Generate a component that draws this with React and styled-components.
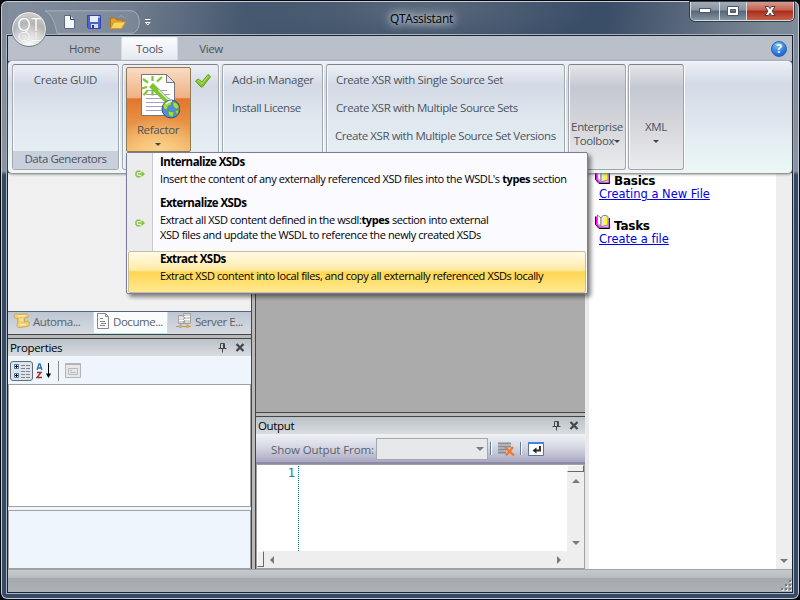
import React from 'react';
import styled, { createGlobalStyle, css } from 'styled-components';

const GlobalStyle = createGlobalStyle`
  * { box-sizing: border-box; }
  body {
    margin: 0;
    overflow: hidden;
    background: #05070a;
    font-family: "Open Sans", "Noto Sans", sans-serif;
    font-size: 11.5px;
    letter-spacing: -0.35px;
    color: #000;
  }
`;

function App() {
  return (
    <Window>
      <GlobalStyle />
      <TitleBar>
        <QuickAccess />
        <Title>QTAssistant</Title>
        <WindowButtons>
          <WindowButton $width={28}>
            <svg width="12" height="6"><rect x=".5" y=".5" width="11" height="4" fill="#fff" stroke="#4d5766" /></svg>
          </WindowButton>
          <WindowButton $width={27}>
            <svg width="12" height="10"><path d="M.5 .5h11v9H.5zM3.500 3.500v3h5v-3z" fill="#fff" stroke="#4d5766" fillRule="evenodd" /></svg>
          </WindowButton>
          <WindowButton $width={47} $close>
            <svg width="14" height="12" viewBox="0 0 14 12">
              <path d="M2 1.500h3.500L7 3.700l1.500-2.200H12L9 6l3 4.500H8.500L7 8.200l-1.500 2.300H2L5 6z" fill="#fff" stroke="#4d3b46" />
            </svg>
          </WindowButton>
        </WindowButtons>
      </TitleBar>
      <Client>
        <TabRow>
          <RibbonTab $width={73}>Home</RibbonTab>
          <RibbonTab $width={57} $active>Tools</RibbonTab>
          <RibbonTab $width={66}>View</RibbonTab>
          <Help>?</Help>
        </TabRow>
        <Ribbon />
        <Work>
          <SideColumn />
          <Splitter />
          <CenterColumn />
          <StartPage />
        </Work>
        <StatusBar>
          <svg width="12" height="12" fill="#747a82">
            <path d="M9 0h2v2H9zM5 4h2v2H5zM9 4h2v2H9zM1 8h2v2H1zM5 8h2v2H5zM9 8h2v2H9z" />
            <path d="M11 1h1v2h-2v-1h1zM7 5h1v2H6v-1h1zM11 5h1v2h-2v-1h1zM3 9h1v2H2v-1h1zM7 9h1v2H6v-1h1zM11 9h1v2h-2v-1h1z" fill="#e4e7ea" />
          </svg>
        </StatusBar>
      </Client>
      <Orb><OrbText>QT</OrbText><OrbMirror>QT</OrbMirror></Orb>
      <RefactorMenu />
    </Window>
  );
}

function QuickAccess() {
  return (
    <Quick>
      <svg width="112" height="26" viewBox="0 0 112 26" fill="none">
        <path d="M1 .8h86c11 0 11 22.500 0 22.500H13C11 12 7 4 1 .8z" fill="#ffffff18" stroke="#a4aebb" />
        {/* new */}
        <path d="M20.500 5.500h6l4 4v9h-10z" fill="#f4f8fb" stroke="#5b6b86" />
        <path d="M26.500 5.500v4h4" fill="#cddbe8" stroke="#33465f" />
        {/* save */}
        <path d="M43.500 5.500h13v13h-12l-1-1z" fill="#4a63d0" stroke="#3348ab" />
        <path d="M46 6h8v6h-8z" fill="#e6effa" />
        <path d="M47 14h7v4h-7z" fill="#d6dce6" />
        <path d="M48 15h2v3h-2z" fill="#26358a" />
        <path d="M54 6h2v2h-2z" fill="#9cb3ea" />
        {/* open */}
        <path d="M66.500 18V8h5l1 2h6v3" fill="#e2a431" stroke="#ad7419" />
        <path d="M66.500 18.500l3.500-6.500h11.500l-4 6.500z" fill="#ffd45e" stroke="#d59a2a" />
        <path d="M75 7c2-2 4-1.500 5 1" stroke="#93aacb" />
        <path d="M101 9.500h5.500M101.500 12.500h4.500l-2.200 2.500z" stroke="#fff" />
      </svg>
    </Quick>
  );
}

function Ribbon() {
  return (
    <RibbonPanel>
      <Group $width={107}>
        <GroupRow $center $track={-0.3}>Create GUID</GroupRow>
        <Caption>Data Generators</Caption>
      </Group>
      <Group $width={97} $gap={3}>
        <RefactorRow>
          <RefactorButton>
            <RefactorIcon />
            <span>Refactor</span>
            <Arrow />
          </RefactorButton>
          <svg width="18" height="18" viewBox="0 0 18 18">
            <path d="M1.500 9l2.700-2L8 10l6-7.500 2.500 2.200L8.500 15H7z" fill="#86c92d" stroke="#5b9a1c" />
            <path d="M3.500 8.800l.7-.5L8 11.500l6.300-7.700" fill="none" stroke="#b5e36b" />
          </svg>
        </RefactorRow>
      </Group>
      <Group $width={101} $gap={3}>
        <GroupRow $track={-0.27}>Add-in Manager</GroupRow>
        <GroupRow>Install License</GroupRow>
      </Group>
      <Group $width={239} $gap={3}>
        <GroupRow $track={-0.36}>Create XSR with Single Source Set</GroupRow>
        <GroupRow>Create XSR with Multiple Source Sets</GroupRow>
        <GroupRow $inset={8} $track={-0.43}>Create XSR with Multiple Source Set Versions</GroupRow>
      </Group>
      <Group $width={58} $gap={3} $collapsed>
        <Collapsed>Enterprise<br />Toolbox<Arrow /></Collapsed>
      </Group>
      <Group $width={56} $gap={2} $collapsed>
        <Collapsed>XML<br /><Arrow /></Collapsed>
      </Group>
    </RibbonPanel>
  );
}

function RefactorIcon() {
  return (
    <svg width="42" height="46" viewBox="0 0 42 46" fill="none">
      <path d="M3.500 1.500h25l8 8v33h-33z" fill="#fff" stroke="#777" />
      <path d="M28.500 1.500v8h8z" fill="#e8e8ee" stroke="#777" />
      <path d="M8 17.500h21M8 21.500h24M8 25.500h24M8 29.500h18M8 33.500h16M8 37.500h16" stroke="#a7a0c0" />
      <path d="M13 12l16 15.500" stroke="#7dc52a" strokeWidth="5.500" />
      <path d="M20.500 17l9.500 9.500" stroke="#d9e3ee" strokeWidth="1.500" />
      <path d="M14.500 3v5M5 6l5 3.500M3.500 15.500l5.500-1.500M5.500 22l4-4M14.500 17v5.500M24 4l-5 4.500" stroke="#7dc52a" strokeWidth="2.200" />
      <circle cx="33" cy="36" r="9" fill="#4c90dc" stroke="#274f86" />
      <path d="M25 33c2-5 6-6 9-5l-1 4-3 1-1 4-3-1zM35 29c3 0 6 3 6 6l-3 1-3-3zM30 38l6 1-1 5-4-1zM37 38l4-1-2 5z" fill="#a6d84a" stroke="#558a20" strokeWidth=".5" />
      <path d="M28 31c2-2 4-3 6-3" stroke="#e7f4ff" strokeWidth="1.500" />
    </svg>
  );
}

function RefactorMenu() {
  return (
    <Menu>
      <MenuItem $height={42}>
        <MenuIcon><LinkIcon /></MenuIcon>
        <MenuText>
          <MenuTitle>Internalize XSDs</MenuTitle>
          <MenuLine>Insert the content of any externally referenced XSD files into the WSDL's <b>types</b> section</MenuLine>
        </MenuText>
      </MenuItem>
      <MenuItem $height={56}>
        <MenuIcon><LinkIcon /></MenuIcon>
        <MenuText $raise={1}>
          <MenuTitle>Externalize XSDs</MenuTitle>
          <MenuLine>Extract all XSD content defined in the wsdl:<b>types</b> section into external</MenuLine>
          <MenuLine>XSD files and update the WSDL to reference the newly created XSDs</MenuLine>
        </MenuText>
      </MenuItem>
      <MenuItem $height={42} $active>
        <MenuIcon $empty />
        <MenuText $raise={2}>
          <MenuTitle>Extract XSDs</MenuTitle>
          <MenuLine>Extract XSD content into local files, and copy all externally referenced XSDs locally</MenuLine>
        </MenuText>
      </MenuItem>
    </Menu>
  );
}

function LinkIcon() {
  return (
    <svg width="10" height="8" viewBox="0 0 10 8" fill="none" stroke="#86c440" strokeWidth="1.500">
      <path d="M5.500 1.300H2.300L1 2.700v2.600l1.300 1.400h3.200M3 4h6M6.500 1.800L9 4 6.500 6.200" />
    </svg>
  );
}

function SideColumn() {
  return (
    <Side>
      <Blank />
      <DocTabs>
        <DocTab $width={85}>
          <svg width="17" height="16" viewBox="0 0 18 16">
            <path d="M2 1c0-1 3-1 3 0l9-.5c3 0 3 4 1 4l-3 .5v4l3-1c3 0 3 5 1 5.500l-9 1.500c-3 0-4-3-2-4V5H3C1 5 1 2 2 1z" fill="#efd06e" stroke="#c9a64a" />
            <path d="M5 2.500h8M7 7h4M7 12h7" stroke="#fbeab0" strokeWidth="1.500" />
          </svg>
          Automa...
        </DocTab>
        <DocTab $width={75} $active>
          <svg width="14" height="16" viewBox="0 0 14 16" fill="none" stroke="#888">
            <path d="M1.500 .5h8l3 3v12h-11z" fill="#fafafa" />
            <path d="M9.500 .5v3h3M4 5.500h3M4 8.500h5M5 10.500h5M4 12.500h5" />
          </svg>
          Docume...
        </DocTab>
        <DocTab $width={83} $last>
          <svg width="17" height="16" viewBox="0 0 17 16">
            <path d="M3.500 2.500h6v8h-6zM8.500 .5h7v10h-7z" fill="#d4d4d4" stroke="#a4a4a4" />
            <path d="M4 5h5M4 7.500h5M9 3.500h6M9 6.500h6" stroke="#fff" />
            <path d="M1 13.500h15M6 10v3M12 11v3" stroke="#9b9b9b" />
            <path d="M4 12h3v3H4zM11 12h3v3h-3z" fill="#e2ad45" />
          </svg>
          Server E...
        </DocTab>
      </DocTabs>
      <Divider />
      <PanelHeader title="Properties" />
      <PropertyTools>
        <svg width="82" height="24" viewBox="0 0 82 24" fill="none">
          <rect x=".5" y="1.500" width="22" height="19" rx="2.500" fill="#dfe3ea" stroke="#646a76" />
          <path d="M4.500 4.500h4v4h-4zM4.500 13.500h4v4h-4z" fill="#fff" stroke="#4f7ab2" />
          <path d="M5 6.500h3M6.500 5v3M5 15.500h3M6.500 14v3" stroke="#000" />
          <path d="M11 5.500h4M16 5.500h4M11 8.500h4M16 8.500h4M11 11.500h4M16 11.500h4M11 14.500h4M16 14.500h4M11 17.500h4M16 17.500h4" stroke="#78839a" />
          <path d="M27 10l2-6h1l2 6M28 8h3" stroke="#2e70a8" strokeWidth="1.300" />
          <path d="M27 12.500h4l-4 5h5" stroke="#a32c2c" strokeWidth="1.400" />
          <path d="M38.500 3v12" stroke="#000" />
          <path d="M36 13.500h5l-2.500 4.500z" fill="#000" />
          <path d="M48.500 1v20" stroke="#8c8c8c" />
          <path d="M55.500 3.500h15v14h-15z" fill="#e8e8e8" stroke="#b4b4b4" />
          <path d="M55 4.500h15" stroke="#b4b4b4" />
          <path d="M58.500 8.500h9v6h-9zM60 10.500h2M60 12.500h6" stroke="#b9b9b9" />
        </svg>
      </PropertyTools>
      <PropertyGrid />
      <PropertyHelp />
    </Side>
  );
}

function PanelHeader({ title }) {
  return (
    <Header>
      <HeaderTitle>{title}</HeaderTitle>
      <svg width="28" height="12" viewBox="0 0 28 12" fill="none" stroke="#414852">
        <path d="M3.500 1.500h4v5h-4zM1.500 6.500h8M5.500 6.500v4M6.500 1.500v5" />
        <path d="M19.500 2l7 7M26.500 2l-7 7" strokeWidth="2.300" />
      </svg>
    </Header>
  );
}

function CenterColumn() {
  return (
    <Center>
      <Canvas />
      <Divider />
      <PanelHeader title="Output" />
      <OutputTools>
        <OutputLabel>Show Output From:</OutputLabel>
        <Combo><Arrow $wide /></Combo>
        <svg width="56" height="16" viewBox="0 0 56 16" fill="none">
          <path d="M2.500 1v13M32.500 1v13" stroke="#5f7f9b" />
          <path d="M3.500 1v13M33.500 1v13" stroke="#fff" />
          <path d="M10 2.500h13M10 5.500h13M10 8.500h10M10 11.500h8" stroke="#888e91" strokeWidth="2" />
          <path d="M17 6l9 8.500M25 6l-7 8.500" stroke="#ef7930" strokeWidth="2.400" />
          <path d="M40.500 1.500h15v13h-15z" fill="#fff" stroke="#5d7290" />
          <path d="M40 1h16v2H40z" fill="#4385dc" />
          <path d="M52 5v4.500h-5" stroke="#333" strokeWidth="2" />
          <path d="M44.500 9.500l4-3v6z" fill="#222" />
        </svg>
      </OutputTools>
      <Editor>
        <Gutter>1</Gutter>
        <div />
        <VScroll>
          <SplitHandle />
          <VTrack>
            <ScrollArrow $dir="up" />
            <ScrollArrow $dir="down" />
          </VTrack>
        </VScroll>
        <HScroll>
          <SideHandle />
          <HTrack>
            <ScrollArrow $dir="left" />
            <ScrollArrow $dir="right" />
          </HTrack>
        </HScroll>
      </Editor>
    </Center>
  );
}

function StartPage() {
  return (
    <Start>
      <Links>
        <Topic><Book /><b>Basics</b></Topic>
        <TopicLink>Creating a New File</TopicLink>
        <Topic><Book /><b>Tasks</b></Topic>
        <TopicLink>Create a file</TopicLink>
      </Links>
      <PageScroll><ScrollArrow $dir="down" /></PageScroll>
    </Start>
  );
}

function Book() {
  return (
    <svg width="16" height="16" viewBox="0 0 16 16" fill="none">
      <path d="M.5 2.500v8l3.500 4h10.500V4" fill="#fff" stroke="#000" />
      <path d="M1.500 2.500v7.500l3.500 4" stroke="#f0f" strokeWidth="1.400" />
      <path d="M5 13.200h9V4" stroke="#c000c0" strokeWidth="1" />
      <path d="M2.500 1l3.500 3v8.500L2.500 9z" fill="#fff" stroke="#888" />
      <path d="M6 4l2-2.500h3l2 1v8.500l-4 1-3 .5z" fill="#e8e8e0" stroke="#888" />
      <path d="M9.500 4l2.500-1v7l-2.500 1z" fill="#ff0" />
    </svg>
  );
}

const Window = styled.div`
  position: relative;
  width: 800px;
  height: 600px;
  padding: 1px 7px 7px 7px;
  border: 1px solid #05070a;
  border-radius: 7px;
  background:
    linear-gradient(to bottom, #7d8998 0, #8a95a3 170px, #34476080 174px, #34476000 260px) left / 7px 100% no-repeat,
    linear-gradient(to bottom, #7d8998 0, #8a95a3 170px, #34476080 174px, #34476000 260px) right / 7px 100% no-repeat,
    radial-gradient(ellipse 170px 44px at 420px 8px, #5b6a7d, #5b6a7d00),
    linear-gradient(100deg, #8490a0 0, #6f7c8d 130px, #475970 240px, #3c4f68 340px, #3b4e68 600px, #566579 670px, #7b8896 760px) top / 100% 36px no-repeat,
    #344a66;
  box-shadow: inset 0 0 0 1px #c5ced8;
`;

const TitleBar = styled.div`
  display: flex;
  height: 33px;
  align-items: flex-start;
`;

const Quick = styled.div`
  flex: none;
  width: 240px;
  padding: 8px 0 0 36px;
`;

const Title = styled.div`
  flex: 1;
  padding: 8px 0 0 142px;
  font-size: 12px;
  line-height: 17px;
  letter-spacing: -0.3px;
  text-shadow: 0 0 6px #cfd8e2, 0 0 8px #cfd8e2, 0 0 12px #cfd8e2;
`;

const WindowButtons = styled.div`
  display: flex;
  height: 19px;
  margin-right: -2px;
  border: 1px solid #d5dbe2;
  border-top: 0;
  border-radius: 0 0 5px 5px;
  box-shadow: 0 0 0 1px #303a48;
  overflow: hidden;
`;

const WindowButton = styled.div`
  display: flex;
  align-items: center;
  justify-content: center;
  width: ${({ $width }) => $width}px;
  border-left: 1px solid #d5dbe2;
  background: ${({ $close }) => $close
    ? 'linear-gradient(#d79a8e, #c4614e 45%, #a92d18 50%, #c8604a)'
    : 'linear-gradient(#a3adb9, #8693a1 45%, #566577 50%, #8593a2)'};
  &:first-child { border-left: 0; }
`;

const Orb = styled.div`
  position: absolute;
  left: 10px;
  top: 10px;
  width: 36px;
  height: 36px;
  border: 1px solid #767d86;
  border-radius: 50%;
  background: radial-gradient(circle at 50% 100%, #fff, #dcdcdd 35%, #b2b4b6 60%, #d3d4d5 90%);
  box-shadow: inset 0 0 0 1px #e9ebed;
  color: #fff;
  font-size: 18px;
  letter-spacing: 0;
  text-align: center;
  text-shadow: 0 0 1px #8e9094;
  overflow: hidden;
`;

const OrbText = styled.div`
  height: 14px;
  margin-top: 5px;
  line-height: 15px;
`;

const OrbMirror = styled.div`
  height: 14px;
  transform: scaleY(-0.7);
  line-height: 18px;
  opacity: 0.7;
`;

const Client = styled.div`
  display: flex;
  flex-direction: column;
  width: 786px;
  height: 558px;
  margin-left: -1px;
  border: 1px solid #1c2430;
  box-shadow: 0 0 0 1px #aab4c0;
`;

const TabRow = styled.div`
  display: flex;
  flex: none;
  height: 25px;
  padding-left: 40px;
  background: #b9c0ca;
  border-bottom: 1px solid #b9bcc0;
`;

const RibbonTab = styled.div`
  width: ${({ $width }) => $width}px;
  margin-top: 1px;
  line-height: 24px;
  text-align: center;
  color: #4c535c;
  ${({ $active }) => $active && css`
    border: 1px solid #a9f0f0;
    border-top-color: #eef3f8;
    border-bottom: 0;
    border-radius: 2px 2px 0 0;
    background: linear-gradient(#fafbfd, #e4e9f1);
    line-height: 22px;
  `}
`;

const Help = styled.div`
  width: 16px;
  height: 16px;
  margin: 5px 5px 0 auto;
  border: 1px solid #2563b5;
  border-radius: 50%;
  background: radial-gradient(circle at 40% 20%, #7fc0f5, #2c7bd8 60%, #2a48c8);
  color: #fff;
  font-size: 12px;
  font-weight: bold;
  line-height: 14px;
  text-align: center;
`;

const RibbonPanel = styled.div`
  position: relative;
  z-index: 1;
  display: flex;
  flex: none;
  height: 112px;
  padding: 2px 0 0 4px;
  border-top: 1px solid #f3f5fa;
  border-radius: 4px;
  background: linear-gradient(#eceff7, #d3dae6 20%, #dbe3ec 45%, #e6f0f3 75%, #ecf7f6);
  box-shadow: 0 1px 3px #666;
`;

const Group = styled.div`
  display: flex;
  flex-direction: column;
  flex: none;
  width: ${({ $width }) => $width}px;
  height: 106px;
  padding-top: 1px;
  margin-left: ${({ $gap = 0 }) => $gap}px;
  border: 1px solid ${({ $collapsed }) => ($collapsed ? '#a2a5ac' : '#a3a9b1')};
  border-top-color: #7f8185;
  border-radius: 3px;
  box-shadow: 1px 0 0 #fff, inset 1px 0 0 #f7f9fc;
  background: ${({ $collapsed }) => $collapsed
    ? 'linear-gradient(#e4e5e8, #c4c8d1 22%, #d3d5da 55%, #ebecee)'
    : 'linear-gradient(#eceff6, #d3dae6 20%, #dfe7ef 50%, #e7f2f5)'};
`;

const GroupRow = styled.div`
  height: 28px;
  padding-left: ${({ $inset = 9 }) => $inset}px;
  line-height: 28px;
  color: #4c535c;
  white-space: nowrap;
  letter-spacing: ${({ $track = -0.4 }) => $track}px;
  ${({ $center }) => $center && 'padding: 0; text-align: center;'}
`;

const Caption = styled.div`
  height: 18px;
  margin-top: auto;
  background: #c9d0dc;
  color: #4c535c;
  line-height: 16px;
  letter-spacing: -0.45px;
  text-align: center;
`;

const RefactorRow = styled.div`
  display: flex;
  gap: 3px;
  padding: 1px 0 0 3px;
  > svg { margin-top: 5px; }
`;

const RefactorButton = styled.div`
  display: flex;
  flex-direction: column;
  align-items: center;
  width: 65px;
  height: 85px;
  padding-top: 5px;
  border: 1px solid #8e7b55;
  border-radius: 2px;
  background:
    radial-gradient(ellipse 45px 35px at 50% 100%, #fcd48c, #fcd48c00),
    linear-gradient(#f9dcc4, #efb184 36%, #e2762e 37%, #ea9a4c 75%, #f2b468);
  color: #4c535c;
  line-height: 18px;
  > span { margin: 2px 1px 0 0; }
  > div { margin: 4px 2px 0 0; }
`;

const Collapsed = styled.div`
  padding-top: 54px;
  text-align: center;
  line-height: 14px;
  color: #4c535c;
  white-space: nowrap;
`;

const Arrow = styled.div`
  display: inline-block;
  border: ${({ $wide }) => ($wide ? 4 : 3)}px solid transparent;
  border-top-color: ${({ $wide }) => ($wide ? '#7b7f85' : '#3f4650')};
  border-bottom: 0;
  vertical-align: 2px;
`;

const Work = styled.div`
  display: flex;
  height: 396px;
  background: #f0f0f0;
`;

const Side = styled.div`
  display: flex;
  flex-direction: column;
  width: 243px;
  background: #eef5fd;
`;

const Blank = styled.div`
  height: 138px;
  background: #f0f0f0;
`;

const DocTabs = styled.div`
  display: flex;
  height: 23px;
  border-top: 1px solid #55657d;
  background: #b9c2cf;
`;

const DocTab = styled.div`
  display: flex;
  align-items: center;
  gap: 3px;
  width: ${({ $width }) => $width}px;
  padding: 0 0 4px ${({ $active, $last }) => ($active ? 2 : $last ? 7 : 5)}px;
  color: #59616c;
  white-space: nowrap;
  letter-spacing: -0.45px;
  background: linear-gradient(#bdc6d3, #d7dbe2);
  ${({ $active }) => $active && css`
    border: 1px solid #a9f0f0;
    border-top: 0;
    padding-bottom: 3px;
    background: #fafbfd;
  `}
`;

const Divider = styled.div`
  flex: none;
  height: 5px;
  border: 1px solid #454545;
  border-width: 1px 0;
  background: #b9b9b9;
`;

const Splitter = styled.div`
  width: 5px;
  border: 1px solid #454545;
  border-width: 0 1px;
  background: #b9b9b9;
`;

const Header = styled.div`
  display: flex;
  flex: none;
  align-items: center;
  justify-content: space-between;
  height: 17px;
  padding: 1px 6px 0 2px;
  background: linear-gradient(#b9c2c9, #d9dcdf);
`;

const HeaderTitle = styled.span`
  padding-bottom: 2px;
`;

const PropertyTools = styled.div`
  flex: none;
  height: 28px;
  padding: 4px 2px 0;
  background: #eef5fd;
`;

const PropertyGrid = styled.div`
  height: 123px;
  border: 1px solid #a0a0a0;
  background: #fff;
`;

const PropertyHelp = styled.div`
  height: 59px;
  margin-top: 3px;
  border: 1px solid #a0a0a0;
`;

const Center = styled.div`
  display: flex;
  flex-direction: column;
  width: 329px;
`;

const Canvas = styled.div`
  height: 239px;
  background: #ababab;
`;

const OutputTools = styled.div`
  display: flex;
  flex: none;
  align-items: center;
  height: 28px;
  margin-top: 2px;
  padding-left: 14px;
  border-bottom: 2px solid #8c8ba6;
  border-radius: 4px 4px 0 0;
  background: linear-gradient(#eceef4, #d4d6e2 45%, #aaa7c2);
`;

const OutputLabel = styled.div`
  width: 106px;
  padding: 1px 0 0 1px;
  letter-spacing: -0.1px;
  color: #59616c;
  white-space: nowrap;
`;

const Combo = styled.div`
  display: flex;
  align-items: center;
  justify-content: flex-end;
  width: 112px;
  height: 22px;
  padding-right: 3px;
  border: 1px solid #a5a8ad;
  background: #e6e8ea;
`;

const Editor = styled.div`
  display: grid;
  flex: 1;
  grid-template: 1fr 17px / 42px 1fr 17px;
  border: 1px solid #a0a0a0;
  background: #fff;
`;

const Gutter = styled.div`
  margin-top: 1px;
  padding: 0 3px 0 0;
  border-right: 1px dotted #008080;
  color: #14808f;
  font: 12px/14px "DejaVu Sans Mono", monospace;
  letter-spacing: 0;
  text-align: right;
`;

const VScroll = styled.div`
  display: flex;
  flex-direction: column;
  background: #eeeeee;
`;

const SplitHandle = styled.div`
  width: 17px;
  height: 7px;
  border: 1px solid #fff;
  border-color: #fff #6d6865 #6d6865 #fff;
  background: #f0f0f0;
`;

const VTrack = styled.div`
  display: flex;
  flex: 1;
  flex-direction: column;
  align-items: center;
  justify-content: space-between;
  padding: 7px 0 6px;
`;

const HScroll = styled.div`
  display: flex;
  grid-column: 1 / 4;
  background: #eeeeee;
`;

const SideHandle = styled.div`
  width: 7px;
  height: 16px;
  border: 1px solid #fff;
  border-color: #fff #6d6865 #6d6865 #fff;
  background: #f0f0f0;
`;

const HTrack = styled.div`
  display: flex;
  flex: 1;
  align-items: center;
  justify-content: space-between;
  padding: 0 23px 0 6px;
`;

const arrowSides = {
  up: 'border-top: 0; border-bottom-color: #7a7a7a;',
  down: 'border-bottom: 0; border-top-color: #7a7a7a;',
  left: 'border-left: 0; border-right-color: #7a7a7a;',
  right: 'border-right: 0; border-left-color: #7a7a7a;',
};

const ScrollArrow = styled.div`
  border: 4px solid transparent;
  ${({ $dir }) => arrowSides[$dir]}
`;

const Start = styled.div`
  display: flex;
  flex: 1;
  border-left: 4px solid #e9e9ee;
  background: #fff;
`;

const Links = styled.div`
  flex: 1;
  padding: 0 0 0 6px;
  font: 11.5px/13px "DejaVu Sans", sans-serif;
`;

const Topic = styled.div`
  display: flex;
  align-items: flex-end;
  gap: 3px;
  height: 15px;
  font-size: 12px;
  letter-spacing: -0.25px;
  > svg { margin-bottom: 3px; }
  a + & { margin-top: 17px; }
`;

const TopicLink = styled.a`
  display: block;
  margin: 0 0 0 4px;
  letter-spacing: -0.02px;
  color: #0000e6;
  text-decoration: underline;
`;

const PageScroll = styled.div`
  display: flex;
  flex-direction: column;
  align-items: center;
  justify-content: flex-end;
  width: 16px;
  padding-bottom: 6px;
  background: #eeeeee;
`;

const StatusBar = styled.div`
  display: flex;
  flex: 1;
  align-items: flex-end;
  justify-content: flex-end;
  border-top: 1px solid #9ea3a7;
  background: linear-gradient(#c6cace, #b9bdc2 34%, #a4a9ae 36%, #adb2b8);
`;

const Menu = styled.div`
  position: absolute;
  z-index: 2;
  left: 125px;
  top: 151px;
  width: 462px;
  height: 142px;
  border: 1px solid #7c7c98;
  border-radius: 2px;
  background: #fbfaff;
  box-shadow: 3px 3px 4px #0007;
`;

const MenuItem = styled.div`
  display: flex;
  height: ${({ $height }) => $height}px;
  ${({ $active }) => $active && css`
    margin: 0 1px;
    border: 1px solid #c9bf98;
    border-radius: 2px;
    background: linear-gradient(#fffbe8, #ffeaa6 45%, #ffd652 50%, #ffe991);
  `}
`;

const MenuIcon = styled.div`
  display: flex;
  align-items: center;
  justify-content: center;
  width: ${({ $empty }) => ($empty ? 24 : 26)}px;
  ${({ $empty }) => !$empty && css`
    border-right: 1px solid #c8cbce;
    background: #ececef;
  `}
`;

const MenuText = styled.div`
  padding-left: 7px;
  margin-top: -${({ $raise = 0 }) => $raise}px;
`;

const MenuTitle = styled.div`
  font-weight: bold;
  line-height: 18px;
  letter-spacing: -0.55px;
`;

const MenuLine = styled.div`
  line-height: 15px;
  font-size: 11px;
  letter-spacing: -0.39px;
  white-space: nowrap;
`;

export default App;
